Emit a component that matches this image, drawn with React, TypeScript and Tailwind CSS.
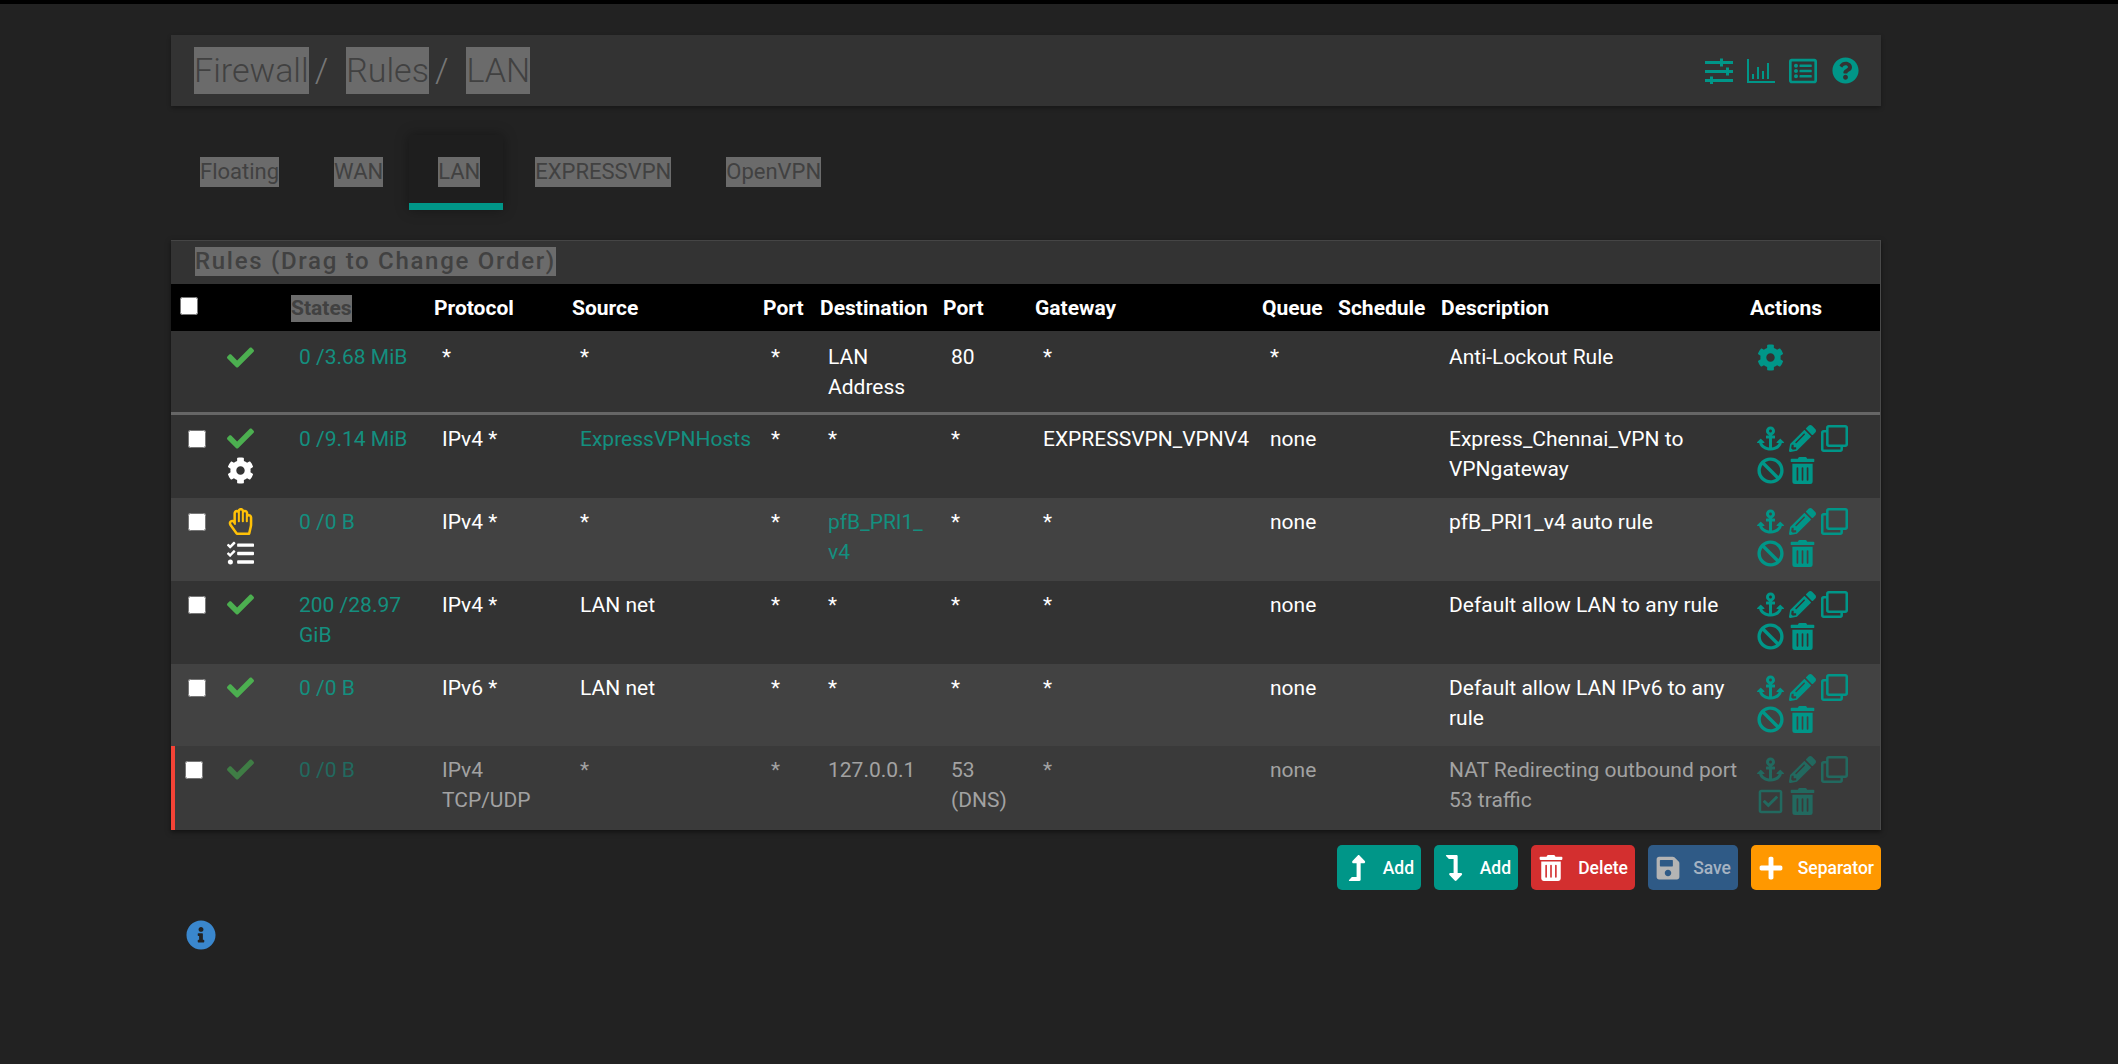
import type { ReactNode } from "react"
import {
  FaAnchor,
  FaBan,
  FaCheck,
  FaCog,
  FaInfoCircle,
  FaLevelDownAlt,
  FaLevelUpAlt,
  FaPencilAlt,
  FaPlus,
  FaQuestionCircle,
  FaRegCheckSquare,
  FaRegClone,
  FaRegHandPaper,
  FaRegListAlt,
  FaSave,
  FaTasks,
  FaTrashAlt,
} from "react-icons/fa"

const teal = "text-[#009688]"
const link = "text-[#148f7f]"

interface Rule {
  status: "pass" | "block"
  extra?: "cog" | "tasks"
  states: string
  protocol: string
  source: ReactNode
  sourceLink?: boolean
  port: string
  dest: ReactNode
  destLink?: boolean
  destPort: string
  gateway: string
  queue: string
  description: string
  height: string
  bg: string
}

const rules: Rule[] = [
  {
    status: "pass",
    extra: "cog",
    states: "0 /9.14 MiB",
    protocol: "IPv4 *",
    source: "ExpressVPNHosts",
    sourceLink: true,
    port: "*",
    dest: "*",
    destPort: "*",
    gateway: "EXPRESSVPN_VPNV4",
    queue: "none",
    description: "Express_Chennai_VPN to VPNgateway",
    height: "h-[83px]",
    bg: "bg-[#333333]",
  },
  {
    status: "block",
    extra: "tasks",
    states: "0 /0 B",
    protocol: "IPv4 *",
    source: "*",
    port: "*",
    dest: (
      <>
        pfB_PRI1_
        <wbr />
        v4
      </>
    ),
    destLink: true,
    destPort: "*",
    gateway: "*",
    queue: "none",
    description: "pfB_PRI1_v4 auto rule",
    height: "h-[83px]",
    bg: "bg-[#424242]",
  },
  {
    status: "pass",
    states: "200 /28.97 GiB",
    protocol: "IPv4 *",
    source: "LAN net",
    port: "*",
    dest: "*",
    destPort: "*",
    gateway: "*",
    queue: "none",
    description: "Default allow LAN to any rule",
    height: "h-[83px]",
    bg: "bg-[#333333]",
  },
  {
    status: "pass",
    states: "0 /0 B",
    protocol: "IPv6 *",
    source: "LAN net",
    port: "*",
    dest: "*",
    destPort: "*",
    gateway: "*",
    queue: "none",
    description: "Default allow LAN IPv6 to any rule",
    height: "h-[82px]",
    bg: "bg-[#424242]",
  },
]

function SlidersIcon() {
  return (
    <svg width="28" height="26" viewBox="0 0 28 26" className="fill-current">
      <rect x="0" y="3" width="28" height="3" />
      <rect x="15" y="0.5" width="3" height="8" />
      <rect x="0" y="12" width="28" height="3" />
      <rect x="21" y="9.5" width="3" height="8" />
      <rect x="0" y="21" width="28" height="3" />
      <rect x="5" y="18.5" width="3" height="8" />
    </svg>
  )
}

function ChartIcon() {
  return (
    <svg width="28" height="26" viewBox="0 0 28 26" className="fill-current">
      <rect x="0" y="1" width="2" height="24" />
      <rect x="0" y="23" width="28" height="2" />
      <rect x="5" y="16" width="2" height="5" />
      <rect x="10" y="9" width="2" height="12" />
      <rect x="15" y="13" width="2" height="8" />
      <rect x="20" y="5" width="2" height="16" />
    </svg>
  )
}

function Marked({ children, className = "" }: { children: ReactNode; className?: string }) {
  return <span className={`inline-block bg-[#6b6b6b] text-[#414141] ${className}`}>{children}</span>
}

function Actions({ disabled = false }: { disabled?: boolean }) {
  const color = disabled ? "text-[#22695f]" : teal
  return (
    <div className={`flex flex-col gap-[5px] ${color}`}>
      <div className="flex items-center gap-[5px]">
        <FaAnchor size={27} />
        <FaPencilAlt size={27} />
        <FaRegClone size={27} />
      </div>
      <div className="flex items-center gap-[5px]">
        {disabled ? <FaRegCheckSquare size={27} /> : <FaBan size={27} />}
        <FaTrashAlt size={27} />
      </div>
    </div>
  )
}

function Th({ children }: { children?: ReactNode }) {
  return <th className="pl-[3px] text-left font-bold">{children}</th>
}

function Td({ children, className = "" }: { children?: ReactNode; className?: string }) {
  return <td className={`pl-[11px] pr-[2px] pt-[9px] align-top ${className}`}>{children}</td>
}

function RuleRow({ rule }: { rule: Rule }) {
  return (
    <tr className={`${rule.height} ${rule.bg}`}>
      <td className="pl-[17px] pt-[15px] align-top">
        <input type="checkbox" className="block h-[18px] w-[18px]" />
      </td>
      <Td>
        <div className="flex flex-col gap-[5px] pt-[1px]">
          {rule.status === "pass" ? (
            <FaCheck size={27} className="text-[#4caf50]" />
          ) : (
            <FaRegHandPaper size={27} className="text-[#ffc107]" />
          )}
          {rule.extra === "cog" && <FaCog size={27} className="text-white" />}
          {rule.extra === "tasks" && <FaTasks size={27} className="text-white" />}
        </div>
      </Td>
      <Td className={link}>{rule.states}</Td>
      <Td>{rule.protocol}</Td>
      <Td className={rule.sourceLink ? link : ""}>{rule.source}</Td>
      <Td>{rule.port}</Td>
      <Td className={rule.destLink ? link : ""}>{rule.dest}</Td>
      <Td>{rule.destPort}</Td>
      <Td>{rule.gateway}</Td>
      <Td>{rule.queue}</Td>
      <Td />
      <Td>{rule.description}</Td>
      <td className="pl-[10px] pt-[10px] align-top">
        <Actions />
      </td>
    </tr>
  )
}

export default function App() {
  const tabs = [
    { label: "Floating", cls: "pl-[29px] pr-[27px] border-b-transparent" },
    { label: "WAN", cls: "pl-[28px] pr-[26px] border-b-transparent" },
    { label: "LAN", cls: "pl-[29px] pr-[23px] bg-[#1e1e1e] border-b-[#009688] shadow-[0_0_12px_rgba(0,0,0,0.35)]" },
    { label: "EXPRESSVPN", cls: "pl-[32px] pr-[27px] border-b-transparent" },
    { label: "OpenVPN", cls: "pl-[28px] pr-[27px] border-b-transparent" },
  ]

  return (
    <div className="min-h-[1064px] border-t-[4px] border-black bg-[#222222] font-[Roboto,sans-serif] text-[21px] leading-[30px] text-white">
      <div className="ml-[171px] w-[1710px] pt-[31px]">
        <div className="flex h-[71px] items-center justify-between bg-[#333333] pl-[23px] pr-[22px] shadow-[0_2px_4px_rgba(0,0,0,0.3)]">
          <h1 className="flex items-center text-[34px] font-light leading-[47px] text-[#777777]">
            <Marked>Firewall</Marked>
            <span className="ml-[6px] mr-[18px]">/</span>
            <Marked>Rules</Marked>
            <span className="ml-[6px] mr-[18px]">/</span>
            <Marked>LAN</Marked>
          </h1>
          <div className={`flex items-center gap-[14px] ${teal}`}>
            <SlidersIcon />
            <ChartIcon />
            <FaRegListAlt size={28} className="mr-[1px]" />
            <FaQuestionCircle size={27} />
          </div>
        </div>

        <ul className="mt-[29px] flex">
          {tabs.map((t) => (
            <li key={t.label} className={`border-b-[7px] pb-[16px] pt-[22px] text-[22px] ${t.cls}`}>
              <Marked className="leading-[30px]">{t.label}</Marked>
            </li>
          ))}
        </ul>

        <div className="mt-[30px] border-r border-[#4a4a4a] bg-[#333333] shadow-[0_2px_5px_rgba(0,0,0,0.5)]">
          <div className="h-[44px] border-t border-[#454545] pl-[24px] pt-[6px]">
            <Marked className="text-[24px] font-medium leading-[29px] tracking-[1.7px]">Rules (Drag to Change Order)</Marked>
          </div>
          <table className="w-full table-fixed border-separate border-spacing-0">
            <colgroup>
              <col className="w-[45px]" />
              <col className="w-[72px]" />
              <col className="w-[143px]" />
              <col className="w-[138px]" />
              <col className="w-[191px]" />
              <col className="w-[57px]" />
              <col className="w-[123px]" />
              <col className="w-[92px]" />
              <col className="w-[227px]" />
              <col className="w-[76px]" />
              <col className="w-[103px]" />
              <col className="w-[309px]" />
              <col className="w-[133px]" />
            </colgroup>
            <thead>
              <tr className="h-[47px] bg-black">
                <th className="pl-[9px] text-left align-top">
                  <input type="checkbox" className="mt-[13px] block h-[18px] w-[18px]" />
                </th>
                <Th />
                <Th>
                  <Marked className="leading-[27px]">States</Marked>
                </Th>
                <Th>Protocol</Th>
                <Th>Source</Th>
                <Th>Port</Th>
                <Th>Destination</Th>
                <Th>Port</Th>
                <Th>Gateway</Th>
                <Th>Queue</Th>
                <Th>Schedule</Th>
                <Th>Description</Th>
                <Th>Actions</Th>
              </tr>
            </thead>
            <tbody>
              <tr className="h-[81px] bg-[#333333]">
                <td />
                <td className="pl-[11px] pt-[13px] align-top">
                  <FaCheck size={27} className="text-[#4caf50]" />
                </td>
                <Td className={`pt-[11px] ${link}`}>0 /3.68 MiB</Td>
                <Td className="pt-[11px]">*</Td>
                <Td className="pt-[11px]">*</Td>
                <Td className="pt-[11px]">*</Td>
                <Td className="pt-[11px]">LAN Address</Td>
                <Td className="pt-[11px]">80</Td>
                <Td className="pt-[11px]">*</Td>
                <Td className="pt-[11px]">*</Td>
                <Td />
                <Td className="pt-[11px]">Anti-Lockout Rule</Td>
                <td className="pl-[10px] pt-[13px] align-top">
                  <FaCog size={27} className={teal} />
                </td>
              </tr>
              <tr>
                <td colSpan={13} className="h-[3px] bg-[#666666] p-0" />
              </tr>
              {rules.map((r) => (
                <RuleRow key={r.description} rule={r} />
              ))}
              <tr className="h-[84px] bg-[#3a3a3a] text-[#a2a2a2]">
                <td className="border-l-4 border-l-[#f44336] pl-[10px] pt-[15px] align-top">
                  <input type="checkbox" className="block h-[18px] w-[18px]" />
                </td>
                <Td>
                  <FaCheck size={27} className="mt-[1px] text-[#3f7d45]" />
                </Td>
                <Td className="text-[#22695f]">0 /0 B</Td>
                <Td>IPv4 TCP/UDP</Td>
                <Td>*</Td>
                <Td>*</Td>
                <Td>127.0.0.1</Td>
                <Td>53 (DNS)</Td>
                <Td>*</Td>
                <Td>none</Td>
                <Td />
                <Td>NAT Redirecting outbound port 53 traffic</Td>
                <td className="pl-[10px] pt-[10px] align-top">
                  <Actions disabled />
                </td>
              </tr>
            </tbody>
          </table>
        </div>

        <div className="mt-[15px] flex justify-end gap-[13px] text-[17.5px] font-medium">
          <button className="flex h-[45px] w-[84px] items-center justify-between rounded-[5px] bg-[#009688] pl-[7px] pr-[7px]">
            <FaLevelUpAlt size={26} />
            <span>Add</span>
          </button>
          <button className="flex h-[45px] w-[84px] items-center justify-between rounded-[5px] bg-[#009688] pl-[7px] pr-[7px]">
            <FaLevelDownAlt size={26} />
            <span>Add</span>
          </button>
          <button className="flex h-[45px] w-[104px] items-center justify-between rounded-[5px] bg-[#d32f2f] pl-[7px] pr-[7px]">
            <FaTrashAlt size={26} />
            <span>Delete</span>
          </button>
          <button className="flex h-[45px] w-[90px] items-center justify-between rounded-[5px] bg-[#2f5a86] pl-[7px] pr-[7px] text-[#a6b3c2]">
            <FaSave size={26} className="text-[#b4b4b4]" />
            <span>Save</span>
          </button>
          <button className="flex h-[45px] w-[130px] items-center justify-between rounded-[5px] bg-[#ff9800] pl-[7px] pr-[7px]">
            <FaPlus size={26} />
            <span>Separator</span>
          </button>
        </div>

        <div className="ml-[15px] mt-[30px] text-[#3a87cd]">
          <FaInfoCircle size={30} />
        </div>
      </div>
    </div>
  )
}
